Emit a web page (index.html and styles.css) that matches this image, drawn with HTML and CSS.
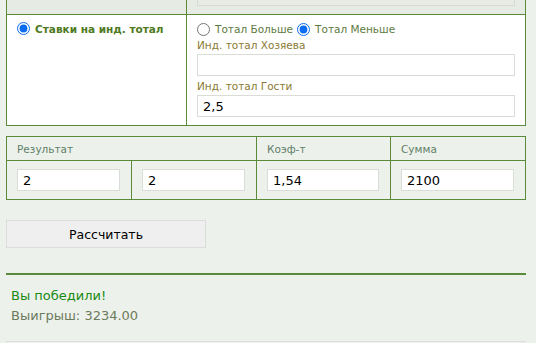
FILE: index.html
```html
<!DOCTYPE html>
<html lang="ru">
<head>
  <meta charset="UTF-8">
  <title>Калькулятор ставок</title>
  <link rel="stylesheet" href="styles.css">
</head>
<body>
  <!-- блок выбора типа ставки -->
  <table class="bet-table">
    <tr class="prev-row">
      <td class="left-cell"></td>
      <td class="right-cell"><input type="text" class="field field-disabled" disabled></td>
    </tr>
    <tr>
      <td class="left-cell">
        <label class="bet-type"><input type="radio" name="type" checked> Ставки на инд. тотал</label>
      </td>
      <td class="right-cell">
        <div class="choice">
          <label><input type="radio" name="tot"> Тотал Больше</label>
          <label><input type="radio" name="tot" checked> Тотал Меньше</label>
        </div>
        <div class="lbl">Инд. тотал Хозяева</div>
        <input type="text" class="field">
        <div class="lbl lbl-next">Инд. тотал Гости</div>
        <input type="text" class="field" value="2,5">
      </td>
    </tr>
  </table>

  <!-- результат и сумма -->
  <table class="result-table">
    <tr class="head">
      <td colspan="2">Результат</td>
      <td>Коэф-т</td>
      <td>Сумма</td>
    </tr>
    <tr class="vals">
      <td class="c1"><input type="text" class="field" value="2"></td>
      <td class="c2"><input type="text" class="field" value="2"></td>
      <td class="c3"><input type="text" class="field" value="1,54"></td>
      <td class="c4"><input type="text" class="field" value="2100"></td>
    </tr>
  </table>

  <button class="calc-btn">Рассчитать</button>

  <div class="outcome">
    <p class="win">Вы победили!</p>
    <p class="payout">Выигрыш: 3234.00</p>
  </div>
</body>
</html>
```

FILE: styles.css
```css
html, body {
  margin: 0;
  padding: 0;
  background: #edf1eb;
  font-family: "DejaVu Sans", Verdana, sans-serif;
  font-size: 10.5px;
  overflow: hidden;
}

body {
  display: flow-root;
  padding: 0 10px 0 6px;
}

table {
  border-collapse: collapse;
  width: 520px;
}

td {
  border: 1px solid #5b8a3a;
  padding: 0;
  vertical-align: top;
}

/* поля ввода */
.field {
  display: block;
  box-sizing: border-box;
  height: 22px;
  margin: 0;
  padding: 0 5px;
  border: 1px solid #dadcd8;
  background: #ffffff;
  font-family: "DejaVu Sans", Verdana, sans-serif;
  font-size: 13px;
  color: #000000;
  outline: none;
}
.field-disabled {
  background: #e8ebe6;
  border-color: #d6dad3;
}

/* верхняя таблица (прокручена, видна только нижняя часть первой строки) */
.bet-table {
  margin-top: -20px;
  table-layout: fixed;
}
.left-cell {
  width: 179px;
  background: #ffffff;
}
.right-cell {
  background: #ffffff;
  padding: 7px 9px 8px 10px;
}
.bet-table .prev-row td {
  background: #e6ebe4;
  height: 33px;
}
.bet-table .prev-row .right-cell {
  padding: 0 9px 0 10px;
}
.bet-table .prev-row .field {
  margin-top: 3px;
  width: 318px;
}
.bet-type {
  display: flex;
  align-items: center;
  gap: 5px;
  margin: 7px 0 0 10px;
  font-weight: bold;
  color: #4e7a22;
}
input[type="radio"] {
  width: 13px;
  height: 13px;
  margin: 0;
  accent-color: #0a6cf0;
}
.choice {
  display: flex;
  gap: 4px;
  height: 14px;
  align-items: center;
  color: #5d7a40;
}
.choice label {
  display: flex;
  align-items: center;
  gap: 5px;
}
.lbl {
  color: #8a7a34;
  line-height: 14px;
  margin: 2px 0;
}
.lbl-next {
  margin-top: 3px;
}
.right-cell .field {
  width: 318px;
}

/* таблица результата */
.result-table {
  margin-top: 10px;
}
.result-table .head td {
  height: 23px;
  padding: 0 10px;
  vertical-align: middle;
  color: #5f8068;
}
.result-table .vals td {
  padding: 8px 10px 8px 10px;
}
.c1, .c2 { width: 104px; }
.c3 { width: 113px; }
.c4 { width: 114px; }
.c1 .field, .c2 .field { width: 103px; }
.c3 .field { width: 112px; }
.c4 .field { width: 113px; }

/* кнопка */
.calc-btn {
  display: block;
  margin-top: 20px;
  width: 200px;
  height: 28px;
  background: #efefef;
  border: 1px solid #dcdcdc;
  font-family: "DejaVu Sans", Verdana, sans-serif;
  font-size: 12.5px;
  color: #000000;
  cursor: pointer;
}

/* итог */
.outcome {
  margin-top: 25px;
  width: 510px;
  border-top: 2px solid #5b8a3a;
  border-bottom: 1px solid #dddddd;
  padding: 11px 5px 15px;
  font-size: 13px;
}
.outcome p {
  margin: 0;
  line-height: 20px;
}
.win {
  color: #1a8a14;
}
.payout {
  color: #6c7a5c;
}
```
